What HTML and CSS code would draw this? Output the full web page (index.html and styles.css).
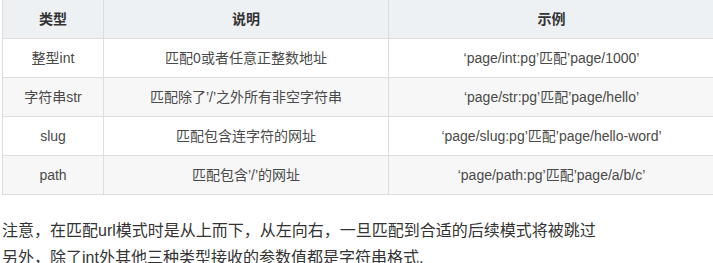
FILE: index.html
```html
<!DOCTYPE html>
<html lang="zh-CN">
<head>
<meta charset="utf-8">
<link rel="stylesheet" href="styles.css">
</head>
<body>
<div class="page">
  <table class="grid">
    <colgroup>
      <col class="c1">
      <col class="c2">
      <col class="c3">
    </colgroup>
    <thead>
      <tr><th>类型</th><th>说明</th><th>示例</th></tr>
    </thead>
    <tbody>
      <tr><td>整型int</td><td>匹配0或者任意正整数地址</td><td>‘page/int:pg’匹配’page/1000’</td></tr>
      <tr><td>字符串str</td><td>匹配除了’/’之外所有非空字符串</td><td>‘page/str:pg’匹配’page/hello’</td></tr>
      <tr><td>slug</td><td>匹配包含连字符的网址</td><td>‘page/slug:pg’匹配’page/hello-word’</td></tr>
      <tr><td>path</td><td>匹配包含’/’的网址</td><td>‘page/path:pg’匹配’page/a/b/c’</td></tr>
    </tbody>
  </table>
  <p class="note">注意，在匹配url模式时是从上而下，从左向右，一旦匹配到合适的后续模式将被跳过</p>
  <p class="note">另外，除了int外其他三种类型接收的参数值都是字符串格式.</p>
</div>
</body>
</html>
```
FILE: styles.css
```css
html, body {
  margin: 0;
  padding: 0;
  background: #ffffff;
}
body {
  font-family: "Liberation Sans", "Noto Sans CJK SC", sans-serif;
  color: #333;
  overflow: hidden;
}
.page {
  padding-left: 2px;
  width: 713px;
}
.grid {
  border-collapse: collapse;
  width: 713px;
  margin-top: -1px;
  table-layout: fixed;
  font-size: 14px;
}
.c1 { width: 101px; }
.c2 { width: 285px; }
.c3 { width: auto; }
.grid th,
.grid td {
  border: 1px solid #dddddd;
  text-align: center;
  line-height: 26px;
  height: 26px;
  padding: 6px 10px;
  white-space: nowrap;
  color: #4a4a4a;
}
.grid th {
  background: #eef1f4;
  font-weight: bold;
  color: #333;
}
.grid tbody tr:nth-child(even) td {
  background: #f7f7f7;
}
.note {
  margin: 0;
  font-size: 16px;
  line-height: 27px;
  color: #333;
  white-space: nowrap;
}
.grid + .note {
  margin-top: 22px;
}
```
